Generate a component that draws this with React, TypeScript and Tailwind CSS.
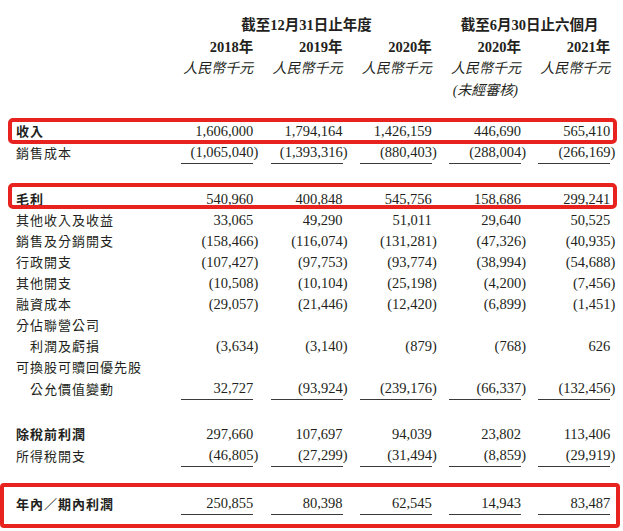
import React from 'react';
import clsx from 'clsx';

type Row = {
  label: string;
  values?: string[];
  bold?: boolean;
  indent?: boolean;
  underline?: boolean;
};

const GRID = 'grid grid-cols-[148px_repeat(5,72px)] gap-x-[17.25px] pl-[5px]';

const topRows: Row[] = [
  { label: '收入', bold: true, values: ['1,606,000', '1,794,164', '1,426,159', '446,690', '565,410'] },
  { label: '銷售成本', underline: true, values: ['(1,065,040)', '(1,393,316)', '(880,403)', '(288,004)', '(266,169)'] },
];

const midRows: Row[] = [
  { label: '毛利', bold: true, values: ['540,960', '400,848', '545,756', '158,686', '299,241'] },
  { label: '其他收入及收益', values: ['33,065', '49,290', '51,011', '29,640', '50,525'] },
  { label: '銷售及分銷開支', values: ['(158,466)', '(116,074)', '(131,281)', '(47,326)', '(40,935)'] },
  { label: '行政開支', values: ['(107,427)', '(97,753)', '(93,774)', '(38,994)', '(54,688)'] },
  { label: '其他開支', values: ['(10,508)', '(10,104)', '(25,198)', '(4,200)', '(7,456)'] },
  { label: '融資成本', values: ['(29,057)', '(21,446)', '(12,420)', '(6,899)', '(1,451)'] },
  { label: '分佔聯營公司' },
  { label: '利潤及虧損', indent: true, values: ['(3,634)', '(3,140)', '(879)', '(768)', '626'] },
  { label: '可換股可贖回優先股' },
  { label: '公允價值變動', indent: true, underline: true, values: ['32,727', '(93,924)', '(239,176)', '(66,337)', '(132,456)'] },
];

const taxRows: Row[] = [
  { label: '除稅前利潤', bold: true, values: ['297,660', '107,697', '94,039', '23,802', '113,406'] },
  { label: '所得稅開支', underline: true, values: ['(46,805)', '(27,299)', '(31,494)', '(8,859)', '(29,919)'] },
];

const profit: Row = {
  label: '年內／期內利潤',
  bold: true,
  underline: true,
  values: ['250,855', '80,398', '62,545', '14,943', '83,487'],
};

// closing paren hangs past the column edge, like a printed accounts table
function Num({ v }: { v: string }) {
  if (v.startsWith('(')) {
    return (
      <>
        <span>{v.slice(0, -1)}</span>
        <span className="-mr-[5px]">)</span>
      </>
    );
  }
  return <span>{v}</span>;
}

function Line({ row, children }: { row: Row; children?: React.ReactNode }) {
  return (
    <div className={clsx('relative', GRID, row.underline ? 'h-[22px]' : 'h-[21px]')}>
      <div
        className={clsx(
          'flex items-center whitespace-nowrap text-[13px] leading-none tracking-[1px]',
          row.bold && 'font-bold',
          row.indent && 'pl-[14px]'
        )}
      >
        {row.label}
      </div>
      {row.values?.map((v, i) => (
        <div
          key={i}
          className={clsx(
            'flex items-center justify-end text-[14.5px] leading-none',
            row.underline && 'border-b border-[#3a3a3a]'
          )}
        >
          <Num v={v} />
        </div>
      ))}
      {children}
    </div>
  );
}

const Frame: React.FC<{ className: string }> = ({ className }) => (
  <div className={clsx('pointer-events-none absolute border-4 border-[#e8231f]', className)} />
);

export default function App() {
  return (
    <div className="h-[531px] w-[623px] overflow-hidden bg-white pl-[11px] pr-[9px] pt-[14px] font-['Liberation_Serif','Noto_Sans_CJK_TC',serif] text-[#231f20]">
      {/* column headings */}
      <div className={clsx(GRID, 'h-[22px] text-[14.5px] font-bold leading-none')}>
        <div />
        <div className="col-span-3 flex items-center justify-center whitespace-nowrap">截至12月31日止年度</div>
        <div className="col-span-2 flex items-center justify-center whitespace-nowrap">截至6月30日止六個月</div>
      </div>
      <div className={clsx(GRID, 'h-[22px] text-[14.5px] font-bold leading-none')}>
        <div />
        {['2018年', '2019年', '2020年', '2020年', '2021年'].map((y, i) => (
          <div key={i} className="flex items-center justify-end whitespace-nowrap">{y}</div>
        ))}
      </div>
      <div className={clsx(GRID, 'h-[22px] text-[14px] italic leading-none')}>
        <div />
        {[0, 1, 2, 3, 4].map((i) => (
          <div key={i} className="flex items-center justify-end whitespace-nowrap">人民幣千元</div>
        ))}
      </div>
      <div className={clsx(GRID, 'h-[22px] text-[14px] italic leading-none')}>
        <div />
        <div />
        <div />
        <div />
        <div className="flex items-center justify-end whitespace-nowrap pr-[3px]">(未經審核)</div>
      </div>

      <div className="mt-[19px]">
        <Line row={topRows[0]}>
          <Frame className="-left-[3px] -right-[3px] -top-[3px] -bottom-[2px] rounded-[5px]" />
        </Line>
        <Line row={topRows[1]} />
      </div>

      <div className="mt-[25px]">
        {midRows.map((r, i) => (
          <Line key={r.label} row={r}>
            {i === 0 && <Frame className="-left-[3px] -right-[3px] -top-[6px] bottom-[1px] rounded-[5px]" />}
          </Line>
        ))}
      </div>

      <div className="mt-[24px]">
        {taxRows.map((r) => (
          <Line key={r.label} row={r} />
        ))}
      </div>

      <div className="relative mt-[16px] h-[45px] pt-[10px]">
        <Frame className="-left-[11px] -right-[6px] inset-y-0 rounded-[4px]" />
        <Line row={profit} />
      </div>
    </div>
  );
}
